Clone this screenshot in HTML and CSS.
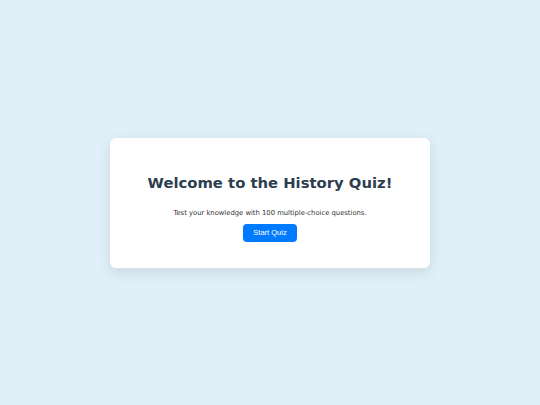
FILE: index.html
```html
<!DOCTYPE html>
<html>
<head>
<meta charset="utf-8">
<link rel="stylesheet" href="styles.css">
</head>
<body>
<div class="card">
  <h1 class="title">Welcome to the History Quiz!</h1>
  <p class="lead">Test your knowledge with 100 multiple-choice questions.</p>
  <button class="start">Start Quiz</button>
</div>
</body>
</html>
```
FILE: styles.css
```css
html, body {
  margin: 0;
  height: 100%;
}
body {
  background: #e0f0f8;
  font-family: "DejaVu Sans", sans-serif;
  display: flex;
  align-items: center;
  justify-content: center;
}
.card {
  width: 320px;
  box-sizing: border-box;
  padding: 36px 20px 26px;
  background: #fff;
  border-radius: 6px;
  box-shadow: 0 4px 14px rgba(0,0,0,0.1);
  display: flex;
  flex-direction: column;
  align-items: center;
  text-align: center;
}
.title {
  margin: 0;
  font-size: 14.8px;
  line-height: 18px;
  font-weight: bold;
  color: #2c3e50;
}
.lead {
  margin: 17px 0 7px;
  font-size: 6.8px;
  line-height: 8px;
  color: #333;
}
.start {
  font-family: "Liberation Sans", Arial, sans-serif;
  font-size: 7.5px;
  color: #fff;
  background: #007bff;
  border: none;
  border-radius: 4px;
  width: 54px;
  height: 18px;
  padding: 0;
}
```
